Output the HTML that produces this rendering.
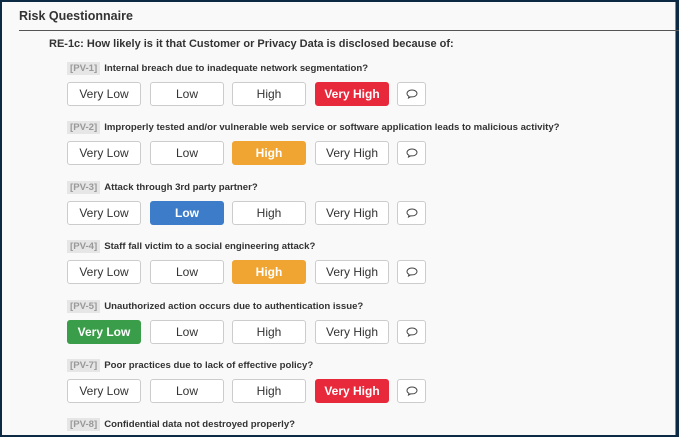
<!DOCTYPE html>
<html><head><style>
*{margin:0;padding:0;box-sizing:border-box}
body{width:679px;height:437px;overflow:hidden;background:#0d2a45;font-family:"Liberation Sans",sans-serif;position:relative}
.p{position:absolute;left:2px;top:2px;width:674px;height:433px;background:#f9f9f9;border-right:1px solid #888}
.t{position:absolute;left:19px;top:9px;font-size:12.5px;font-weight:bold;color:#333}
.ln{position:absolute;left:19px;top:30px;width:660px;height:1px;background:#555}
.h{position:absolute;left:49px;top:38px;font-size:11px;font-weight:bold;color:#333}
.q{position:absolute;left:67px;font-size:9.6px;font-weight:bold;color:#333;white-space:nowrap}
.q span{background:#e6e6e6;color:#999;padding:1px 3px;margin-right:4px}
.b{position:absolute;height:24px;border:1px solid #ccc;border-radius:3px;background:#fff;font-size:12px;color:#333;text-align:center;line-height:22px}
</style></head><body>
<div class="p"></div>
<div class="t">Risk Questionnaire</div>
<div class="ln"></div>
<div class="h">RE-1c: How likely is it that Customer or Privacy Data is disclosed because of:</div>
<div id="c"></div>
<script>
var rows=[["PV-1","Internal breach due to inadequate network segmentation?",3],
["PV-2","Improperly tested and/or vulnerable web service or software application leads to malicious activity?",2],
["PV-3","Attack through 3rd party partner?",1],
["PV-4","Staff fall victim to a social engineering attack?",2],
["PV-5","Unauthorized action occurs due to authentication issue?",0],
["PV-7","Poor practices due to lack of effective policy?",3]];
var ys=[82,141,201,260,320,379],xs=[67,150,232,315],ws=74,lab=["Very Low","Low","High","Very High"],col=["#3a9d4a","#3d7cc9","#f0a533","#e8293b"];
var h="";
rows.forEach(function(r,i){var y=ys[i];
h+='<div class="q" style="top:'+(y-19)+'px"><span>['+r[0]+']</span>'+r[1]+'</div>';
for(var j=0;j<4;j++){var s=j==r[2]?'background:'+col[j]+';border-color:'+col[j]+';color:#fff;font-weight:bold;':'';
h+='<div class="b" style="left:'+xs[j]+'px;top:'+y+'px;width:'+ws+'px;'+s+'">'+lab[j]+'</div>';}
h+='<div class="b" style="left:397px;top:'+y+'px;width:29px"><svg width="12" height="10" viewBox="0 0 12 10" style="margin-top:6px"><path d="M6 1C3 1 1 2.6 1 4.5c0 1.2.8 2.2 2 2.8L2.5 9l2.3-1.2c.4.1.8.1 1.2.1 3 0 5-1.6 5-3.4S9 1 6 1z" fill="none" stroke="#444" stroke-width="1"/></svg></div>';});
h+='<div class="q" style="top:419px"><span>[PV-8]</span>Confidential data not destroyed properly?</div>';
document.getElementById("c").innerHTML=h;
</script>
</body></html>
